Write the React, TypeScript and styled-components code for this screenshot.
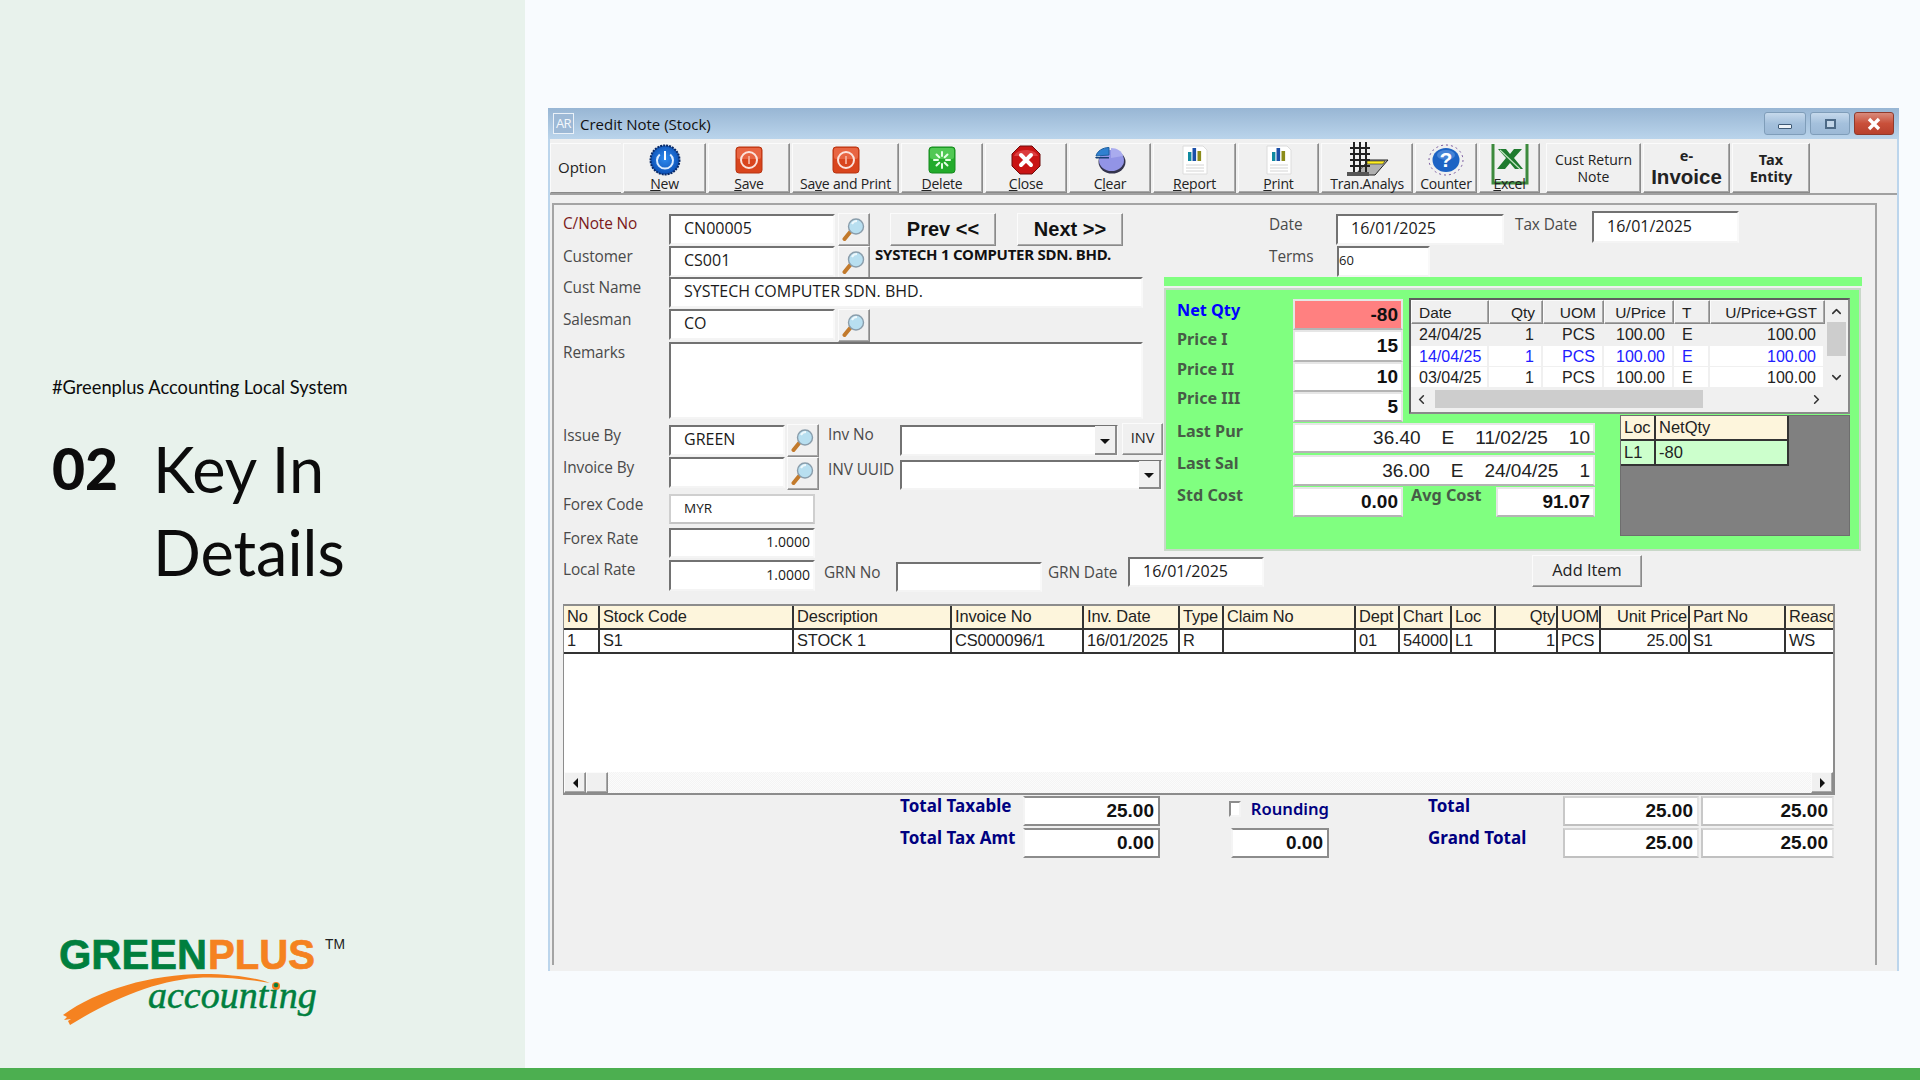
import React from "react";
import styled, { createGlobalStyle, css } from "styled-components";
import { ChevronUp, ChevronDown, ChevronLeft, ChevronRight } from "lucide-react";

const GlobalStyle = createGlobalStyle`
  html, body {
    margin: 0;
    padding: 0;
    background: #f8fbfe;
  }
  * {
    box-sizing: border-box;
  }
`;

const UI_FONT = `"Open Sans", "Noto Sans", sans-serif`;
const GRID_FONT = `"Liberation Sans", Arial, sans-serif`;
const BOLD_FONT = `"Noto Sans", sans-serif`;

const raised = css`
  border: 1px solid;
  border-color: #fbfbfb #8a8a8a #8a8a8a #fbfbfb;
  box-shadow: inset -1px -1px 0 #a8a8a8;
  background: #f0f0f0;
`;

const Page = styled.div`
  width: 1920px;
  height: 1080px;
  display: flex;
  flex-direction: column;
  overflow: hidden;
`;

const Content = styled.div`
  flex: 1;
  display: flex;
  min-height: 0;
`;

const BottomBar = styled.div`
  height: 12px;
  background: #4caf50;
`;

const Sidebar = styled.aside`
  width: 525px;
  background: #e8f2ec;
  padding: 376px 0 0 52px;
  display: flex;
  flex-direction: column;
  font-family: Lato, "Open Sans", sans-serif;
  color: #0c0c0c;
`;

const Tagline = styled.div`
  font-size: 18.3px;
  line-height: 22px;
`;

const Heading = styled.div`
  display: flex;
  align-items: flex-start;
  margin-top: 29px;
`;

const StepNumber = styled.div`
  width: 101px;
  font-size: 57px;
  line-height: 83px;
  font-weight: 900;
`;

const StepTitle = styled.div`
  font-size: 63px;
  line-height: 83px;
`;

const LogoWrap = styled.div`
  margin-top: auto;
  margin-bottom: 28px;
  height: 110px;
`;

const Main = styled.main`
  flex: 1;
  padding: 108px 0 0 23px;
  background: #f8fbfe;
`;

const Window = styled.section`
  width: 1351px;
  height: 863px;
  background: #f0f0f0;
  border-left: 2px solid #bcd5ec;
  border-right: 2px solid #bcd5ec;
  display: flex;
  flex-direction: column;
  font-family: ${UI_FONT};
  color: #444;
`;

const TitleBar = styled.header`
  height: 31px;
  margin: 0 -2px;
  padding: 0 5px 0 5px;
  display: flex;
  align-items: center;
  background: linear-gradient(#98b6d4, #bad4eb);
`;

const AppIcon = styled.div`
  width: 21px;
  height: 21px;
  border: 1px solid #eaf1f8;
  color: #f4f8fc;
  font-size: 13px;
  line-height: 19px;
  text-align: center;
  letter-spacing: -0.5px;
  background: #9db9d6;
`;

const TitleText = styled.div`
  margin-left: 6px;
  font-size: 15px;
  color: #111;
`;

const WinControls = styled.div`
  margin-left: auto;
  display: flex;
  gap: 4px;
`;

const WinButton = styled.div<{ $close?: boolean; $w: number }>`
  width: ${(p) => p.$w}px;
  height: 23px;
  border-radius: 3px;
  border: 1px solid ${(p) => (p.$close ? "#8f3a2c" : "#7f9db9")};
  background: ${(p) =>
    p.$close
      ? "linear-gradient(#d98b7c, #c9503a 50%, #b8412e)"
      : "linear-gradient(#c6d9ec, #a4c0dc 50%, #9cb9d6)"};
  display: flex;
  align-items: center;
  justify-content: center;
`;

const MinGlyph = styled.div`
  width: 14px;
  height: 5px;
  margin-top: 5px;
  background: #eef3f8;
  border: 1px solid #3f5a76;
  border-radius: 1px;
`;

const MaxGlyph = styled.div`
  width: 11px;
  height: 10px;
  background: #c2d5e8;
  border: 2px solid #4c6986;
`;

const Toolbar = styled.nav`
  height: 52px;
  margin-top: 4px;
  display: flex;
  gap: 2px;
  border-bottom: 2px solid #a0a0a0;
  color: #222;
`;

const OptionLabel = styled.div`
  width: 71px;
  padding-left: 7px;
  font-size: 15px;
  line-height: 46px;
  ${raised}
  border-right: none;
  box-shadow: none;
`;

const ToolButton = styled.button<{ $w: number; $gap?: number }>`
  ${raised}
  width: ${(p) => p.$w}px;
  margin-left: ${(p) => p.$gap || 0}px;
  padding: 0;
  font-family: ${UI_FONT};
  color: #222;
  display: flex;
  flex-direction: column;
  align-items: center;
`;

const ToolIcon = styled.span`
  height: 32px;
  display: flex;
  align-items: center;
  justify-content: center;
  position: relative;
  z-index: 0;
`;

const ToolLabel = styled.span`
  font-size: 14px;
  line-height: 15px;
  letter-spacing: -0.2px;
  white-space: nowrap;
  position: relative;
  z-index: 1;
`;

const TextTool = styled(ToolButton)<{ $bold?: boolean }>`
  justify-content: center;
  font-size: ${(p) => (p.$bold ? "14.5px" : "14px")};
  line-height: 17px;
  font-weight: ${(p) => (p.$bold ? 700 : 400)};
  color: #222;
  font-family: ${(p) => (p.$bold ? BOLD_FONT : UI_FONT)};
`;

const BigLine = styled.span`
  font-family: ${GRID_FONT};
  font-size: 20.5px;
  line-height: 25px;
`;

const Panel = styled.div`
  height: 762px;
  margin: 8px 20px 0 2px;
  border: 2px solid #a4a4a4;
  border-bottom: none;
  padding: 6px 0 0 9px;
  display: flex;
  flex-direction: column;
`;

const TopArea = styled.div`
  height: 347px;
  display: flex;
  align-items: flex-start;
`;

const LeftForm = styled.div`
  width: 601px;
  padding-top: 2px;
  display: flex;
  flex-direction: column;
`;

const RightForm = styled.div`
  width: 698px;
  display: flex;
  flex-direction: column;
`;

const FormRow = styled.div<{ $h: number }>`
  height: ${(p) => p.$h}px;
  display: flex;
  align-items: flex-start;
`;

const Label = styled.div<{ $w?: number; $ml?: number; $mt?: number; $color?: string }>`
  width: ${(p) => p.$w ?? 106}px;
  margin-left: ${(p) => p.$ml || 0}px;
  margin-top: ${(p) => p.$mt || 0}px;
  flex-shrink: 0;
  font-size: 15.4px;
  letter-spacing: -0.1px;
  line-height: 22px;
  white-space: nowrap;
  color: ${(p) => p.$color || "#4a4a4a"};
`;

const Field = styled.div<{
  $w: number;
  $h?: number;
  $mt?: number;
  $ml?: number;
  $right?: boolean;
  $flat?: boolean;
  $pad?: number;
  $size?: number;
}>`
  width: ${(p) => p.$w}px;
  height: ${(p) => p.$h ?? 31}px;
  margin-top: ${(p) => p.$mt || 0}px;
  margin-left: ${(p) => p.$ml || 0}px;
  flex-shrink: 0;
  background: #fff;
  color: #1a1a1a;
  font-size: ${(p) => p.$size ?? 16}px;
  display: flex;
  align-items: center;
  white-space: pre;
  padding: 0 ${(p) => (p.$right ? 3 : 0)}px 3px ${(p) => p.$pad ?? 13}px;
  justify-content: ${(p) => (p.$right ? "flex-end" : "flex-start")};
  border: 2px solid;
  border-color: ${(p) =>
    p.$flat ? "#cfcfcf #cfcfcf #c4c4c4 #cfcfcf" : "#727272 #f9f9f9 #f4f4f4 #727272"};
`;

const ComboArrow = styled.div`
  width: 22px;
  height: calc(100% + 5px);
  margin-left: auto;
  margin-right: -1px;
  margin-bottom: -3px;
  background: #f0f0f0;
  border-right: 2px solid #8a8a8a;
  border-bottom: 2px solid #8a8a8a;
  display: flex;
  align-items: center;
  justify-content: center;
  &::after {
    content: "";
    margin-top: 3px;
    border-left: 5px solid transparent;
    border-right: 5px solid transparent;
    border-top: 5px solid #111;
  }
`;

const SearchButton = styled.div<{ $ml?: number; $mt?: number }>`
  ${raised}
  width: 32px;
  height: 33px;
  margin-left: ${(p) => p.$ml ?? 3}px;
  margin-top: ${(p) => p.$mt || 0}px;
  display: flex;
  align-items: center;
  justify-content: center;
  flex-shrink: 0;
`;

const NavButton = styled.button<{ $ml: number }>`
  ${raised}
  width: 106px;
  height: 33px;
  margin-left: ${(p) => p.$ml}px;
  padding: 0;
  font-family: ${GRID_FONT};
  font-weight: 700;
  font-size: 20px;
  color: #111;
`;

const SmallButton = styled.button<{
  $w: number;
  $h: number;
  $ml: number;
  $mt: number;
  $size: number;
}>`
  ${raised}
  width: ${(p) => p.$w}px;
  height: ${(p) => p.$h}px;
  margin-left: ${(p) => p.$ml}px;
  margin-top: ${(p) => p.$mt}px;
  padding: 0 0 3px;
  font-family: ${UI_FONT};
  font-size: ${(p) => p.$size}px;
  color: #222;
  flex-shrink: 0;
`;

const CompanyName = styled.div`
  margin-left: 5px;
  font-family: ${BOLD_FONT};
  font-weight: 700;
  font-size: 15px;
  line-height: 17px;
  letter-spacing: -0.25px;
  color: #111;
  white-space: nowrap;
`;

const GreenBand = styled.div`
  height: 9px;
  background: #80ff80;
  margin-bottom: 2px;
`;

const GreenPanel = styled.div`
  height: 263px;
  margin-right: 1px;
  background: #80ff80;
  border: 2px solid #c8d8c8;
  padding: 8px 0 0 11px;
  display: flex;
  flex-direction: column;
`;

const GreenTop = styled.div`
  height: 125px;
  display: flex;
  align-items: flex-start;
`;

const PriceLabels = styled.div`
  width: 116px;
  padding-top: 1px;
  display: flex;
  flex-direction: column;
`;

const PriceLabel = styled.div<{ $blue?: boolean }>`
  height: 29.3px;
  line-height: 22px;
  font-family: ${BOLD_FONT};
  font-size: 16.2px;
  font-weight: 700;
  color: ${(p) => (p.$blue ? "#0000ff" : "#475c47")};
`;

const PriceFields = styled.div`
  width: 110px;
  padding-top: 1px;
  display: flex;
  flex-direction: column;
`;

const ValueField = styled.div<{
  $h: number;
  $w?: number;
  $red?: boolean;
  $ml?: number;
}>`
  width: ${(p) => (p.$w ? `${p.$w}px` : "100%")};
  height: ${(p) => p.$h}px;
  margin-left: ${(p) => p.$ml || 0}px;
  flex-shrink: 0;
  background: ${(p) => (p.$red ? "#ff8080" : "#fff")};
  border: 2px solid #e6e6e6;
  border-bottom-color: #b4b4b4;
  padding-right: 3px;
  font-family: ${GRID_FONT};
  font-weight: 700;
  font-size: 19px;
  color: #111;
  display: flex;
  align-items: center;
  justify-content: flex-end;
`;

const HistoryBox = styled.div`
  width: 441px;
  height: 116px;
  margin-left: 6px;
  border: 2px solid #5e5e5e;
  border-right-color: #8a8a8a;
  border-bottom-color: #8a8a8a;
  background: #f0f0f0;
  display: flex;
  flex-wrap: wrap;
  align-content: flex-start;
  font-family: ${GRID_FONT};
  font-size: 16px;
`;

const HistoryGrid = styled.div`
  width: 414px;
  display: grid;
  grid-template-columns: 78px 54px 61px 70px 36px 115px;
  grid-template-rows: 24px 22px 21px 21px;
  color: #222;
`;

const HistoryHead = styled.div<{ $right?: boolean }>`
  ${raised}
  padding: 0 ${(p) => (p.$right ? 7 : 0)}px 0 ${(p) => (p.$right ? 0 : 7)}px;
  line-height: 23px;
  font-size: 15.5px;
  text-align: ${(p) => (p.$right ? "right" : "left")};
  white-space: nowrap;
  overflow: hidden;
`;

const HistoryCell = styled.div<{ $right?: boolean; $tone: "selected" | "blue" | "plain" }>`
  padding: 0 ${(p) => (p.$right ? 7 : 0)}px 0 ${(p) => (p.$right ? 0 : 8)}px;
  text-align: ${(p) => (p.$right ? "right" : "left")};
  line-height: 21px;
  background: ${(p) => (p.$tone === "selected" ? "#f0f0f0" : "#fff")};
  color: ${(p) => (p.$tone === "blue" ? "#2020ff" : "#222")};
  border-right: 2px solid #f0f0f0;
  border-bottom: 1px solid #f0f0f0;
`;

const VScroll = styled.div`
  width: 23px;
  height: 88px;
  display: flex;
  flex-direction: column;
  align-items: center;
  color: #333;
`;

const VArrow = styled.div<{ $end?: boolean }>`
  height: 22px;
  margin-top: ${(p) => (p.$end ? "auto" : 0)};
  display: flex;
  align-items: center;
`;

const VThumb = styled.div`
  width: 19px;
  height: 34px;
  background: #cdcdcd;
`;

const HScroll = styled.div`
  width: 100%;
  height: 22px;
  display: flex;
  align-items: center;
  color: #333;
  background: #f0f0f0;
`;

const HThumb = styled.div`
  width: 268px;
  height: 18px;
  margin: 0 auto 0 3px;
  background: #cdcdcd;
`;

const ArrowBox = styled.div`
  width: 21px;
  display: flex;
  justify-content: center;
`;

const GreenBottom = styled.div`
  display: flex;
  align-items: flex-start;
`;

const CostColumn = styled.div`
  width: 418px;
  display: flex;
  flex-direction: column;
`;

const CostRow = styled.div<{ $h: number }>`
  height: ${(p) => p.$h}px;
  display: flex;
`;

const CostLabel = styled.div<{ $ml?: number; $w: number }>`
  width: ${(p) => p.$w}px;
  margin-left: ${(p) => p.$ml || 0}px;
  flex-shrink: 0;
  font-family: ${BOLD_FONT};
  font-size: 16.2px;
  font-weight: 700;
  line-height: 16px;
  color: #475c47;
  white-space: nowrap;
`;

const CostValue = styled.div<{ $h: number }>`
  flex: 1;
  height: ${(p) => p.$h}px;
  background: #fff;
  border: 2px solid #e6e6e6;
  border-bottom-color: #b4b4b4;
  padding-right: 3px;
  display: flex;
  align-items: center;
  justify-content: flex-end;
  gap: 21px;
  font-family: ${GRID_FONT};
  font-size: 19px;
  color: #222;
`;

const StockBox = styled.div`
  width: 230px;
  height: 121px;
  margin: -8px 0 0 25px;
  background: #808080;
  border: 1px solid #6e6e6e;
`;

const StockTable = styled.div`
  width: 168px;
  display: grid;
  grid-template-columns: 35px 133px;
  grid-template-rows: 25px 25px;
  font-family: ${GRID_FONT};
  font-size: 16.5px;
  color: #222;
  line-height: 23px;
`;

const StockHead = styled.div`
  background: #fdf5dc;
  padding-left: 3px;
  border-right: 2px solid #333;
  border-bottom: 2px solid #333;
`;

const StockCell = styled.div`
  background: #ccffcc;
  padding-left: 3px;
  border-right: 2px solid #333;
  border-bottom: 2px solid #333;
`;

const DataGrid = styled.div`
  width: 1272px;
  height: 191px;
  margin-top: 13px;
  border-top: 2px solid #8c8c8c;
  border-left: 1px solid #8c8c8c;
  border-right: 2px solid #8c8c8c;
  background: #fff;
  display: flex;
  flex-direction: column;
  font-family: ${GRID_FONT};
  font-size: 16.4px;
  letter-spacing: -0.1px;
  color: #222;
`;

const GRID_COLUMNS = [36, 194, 158, 132, 96, 44, 132, 44, 52, 44, 62, 43, 89, 96, 47];

const GridRow = styled.div`
  display: grid;
  grid-template-columns: ${GRID_COLUMNS.map((w) => `${w}px`).join(" ")};
  height: 24px;
`;

const GridCell = styled.div<{ $head?: boolean; $right?: boolean }>`
  background: ${(p) => (p.$head ? "#fdf5dc" : "#fff")};
  border-right: 2px solid #333;
  border-bottom: 2px solid #333;
  padding: 0 ${(p) => (p.$right ? 1 : 0)}px 0 ${(p) => (p.$right ? 0 : 3)}px;
  line-height: 20px;
  text-align: ${(p) => (p.$right ? "right" : "left")};
  overflow: hidden;
  white-space: nowrap;
  &:last-child {
    border-right: none;
  }
`;

const GridFill = styled.div`
  flex: 1;
`;

const GridScroll = styled.div`
  height: 23px;
  display: flex;
  justify-content: space-between;
  background: repeating-conic-gradient(#f4f4f4 0 25%, #fbfbfb 0 50%) 0 0 / 2px 2px;
  border-bottom: 2px solid #8c8c8c;
`;

const ScrollLeft = styled.div`
  display: flex;
`;

const ScrollButton = styled.div<{ $dir?: "left" | "right" }>`
  ${raised}
  width: 22px;
  height: 21px;
  display: flex;
  align-items: center;
  justify-content: center;
  &::after {
    content: "";
    border-top: 5px solid transparent;
    border-bottom: 5px solid transparent;
    ${(p) =>
      p.$dir === "left"
        ? "border-right: 5px solid #111;"
        : p.$dir === "right"
          ? "border-left: 5px solid #111;"
          : ""}
  }
`;

const Totals = styled.div`
  display: grid;
  grid-template-columns: 337px 123px 137px 69px 100px 99px 135px 136px 2px 133px;
  grid-template-rows: 30px 30px;
  row-gap: 2px;
  margin-top: 1px;
  align-items: start;
`;

const TotalLabel = styled.div<{ $col: number }>`
  grid-column: ${(p) => p.$col};
  font-family: ${BOLD_FONT};
  font-weight: 700;
  font-size: 17px;
  line-height: 19px;
  letter-spacing: 0.05px;
  color: #000080;
  white-space: nowrap;
`;

const TotalValue = styled.div<{ $col: number; $flat?: boolean; $ml?: number }>`
  grid-column: ${(p) => p.$col};
  height: 30px;
  margin-left: ${(p) => p.$ml || 0}px;
  background: #fff;
  border: 2px solid;
  border-color: ${(p) =>
    p.$flat ? "#d4d4d4 #e4e4e4 #c0c0c0 #c8c8c8" : "#8c8c8c #8c8c8c #8c8c8c #f4f4f4"};
  padding-right: 4px;
  font-family: ${GRID_FONT};
  font-weight: 700;
  font-size: 19px;
  color: #111;
  display: flex;
  align-items: center;
  justify-content: flex-end;
`;

const RoundingRow = styled.div`
  grid-column: 5;
  display: flex;
  align-items: center;
  padding-top: 1px;
  white-space: nowrap;
`;

const CheckBox = styled.div`
  width: 16px;
  height: 16px;
  background: #fff;
  border: 2px solid;
  border-color: #8c8c8c #f4f4f4 #f4f4f4 #8c8c8c;
`;

const RoundingLabel = styled.div`
  margin-left: 10px;
  font-family: ${BOLD_FONT};
  font-weight: 600;
  font-size: 16.6px;
  color: #000080;
`;

const Key = styled.span`
  text-decoration: underline;
`;

const Spacer = styled.div<{ $col: number }>`
  grid-column: ${(p) => p.$col};
`;

const OverflowSvg = styled.svg<{ $mt?: number }>`
  overflow: visible;
  margin-top: ${(p) => p.$mt || 0}px;
`;

function PowerIcon() {
  return (
    <svg width="32" height="32" viewBox="0 0 32 32">
      <defs>
        <radialGradient id="pw" cx="50%" cy="45%" r="55%">
          <stop offset="0%" stopColor="#2f8cf0" />
          <stop offset="100%" stopColor="#0b4fb5" />
        </radialGradient>
      </defs>
      <circle cx="16" cy="16" r="14.5" fill="url(#pw)" stroke="#0a2a66" strokeWidth="2" strokeDasharray="2 1" />
      <path d="M10.8 10.5a8 8 0 1 0 10.4 0" fill="none" stroke="#dcecff" strokeWidth="2" />
      <path d="M16 7v9" stroke="#fff" strokeWidth="2" />
    </svg>
  );
}

function SaveIcon() {
  return (
    <svg width="28" height="28" viewBox="0 0 28 28">
      <rect x="1" y="1" width="26" height="26" rx="3" fill="#d9451d" stroke="#b73512" />
      <rect x="2" y="2" width="24" height="11" rx="2" fill="#ee7352" opacity="0.7" />
      <circle cx="14" cy="14" r="8" fill="none" stroke="#fbe3dc" strokeWidth="2" />
      <path d="M14 10v8" stroke="#f3a48e" strokeWidth="2" />
    </svg>
  );
}

function DeleteIcon() {
  return (
    <svg width="28" height="28" viewBox="0 0 28 28">
      <rect x="1" y="1" width="26" height="26" rx="3" fill="#23ab2b" stroke="#178a1e" />
      <rect x="2" y="2" width="24" height="11" rx="2" fill="#6fdc6f" opacity="0.6" />
      <g stroke="#e6ffe6" strokeWidth="2" strokeLinecap="round">
        <path d="M14 6v4M14 18v4M6 14h4M18 14h4M8.5 8.5l2.8 2.8M16.7 16.7l2.8 2.8M19.5 8.5l-2.8 2.8M11.3 16.7l-2.8 2.8" />
      </g>
    </svg>
  );
}

function CloseIcon() {
  return (
    <svg width="30" height="30" viewBox="0 0 30 30">
      <path d="M9 1h12l8 8v12l-8 8H9l-8-8V9z" fill="#c91414" stroke="#6e0a0a" strokeLinejoin="round" />
      <path d="M3 11C6 3 24 3 27 11" fill="#e8585a" opacity="0.6" />
      <path d="M10 10l10 10M20 10L10 20" stroke="#fff" strokeWidth="4" strokeLinecap="round" />
    </svg>
  );
}

function ClearIcon() {
  return (
    <svg width="32" height="28" viewBox="0 0 32 28">
      <ellipse cx="18" cy="16" rx="13.5" ry="11.5" fill="#33334d" />
      <ellipse cx="17.5" cy="14.5" rx="12.5" ry="10.5" fill="#9294e6" />
      <path d="M2 10C3 5 9 1.5 15 1.5V9z" fill="#2f80d0" stroke="#1d5f9f" />
      <path d="M1 11h14v1.5H2z" fill="#163f73" />
      <path d="M17 2c6 0 11 3 12 8l-12 2z" fill="#a9abee" />
    </svg>
  );
}

function ReportIcon() {
  return (
    <svg width="26" height="30" viewBox="0 0 26 30">
      <path d="M1 1h20l4 4v24H1z" fill="#fff" stroke="#dcdcdc" />
      <rect x="6" y="7" width="3.4" height="9" fill="#0f8aa0" />
      <rect x="10.5" y="3" width="3.6" height="13" fill="#1a4fa8" />
      <rect x="15.5" y="6" width="3.6" height="10" fill="#8c8c1a" />
      <path d="M4 20h18M4 23h18M4 26h18" stroke="#d4d4d4" />
    </svg>
  );
}

function TranIcon() {
  return (
    <OverflowSvg width="44" height="36" viewBox="0 0 44 36">
      <path d="M24 18h19L30 33H10z" fill="#b0b0b0" stroke="#222" />
      <path d="M22 19h18l-2 3H22z" fill="#ffee22" stroke="#222" strokeWidth="0.6" />
      <path d="M9 0v30M21 0v30M5 6h20M5 12h20M5 18h20M5 24h20" stroke="#222" strokeWidth="2" fill="none" />
      <path d="M15 0v30" stroke="#222" strokeWidth="2" />
      <path d="M2 30h22v4H2z" fill="#555" />
    </OverflowSvg>
  );
}

function CounterIcon() {
  return (
    <svg width="36" height="32" viewBox="0 0 36 32">
      <ellipse cx="18" cy="16" rx="17" ry="15" fill="none" stroke="#7a5aa0" strokeDasharray="2 3" />
      <ellipse cx="18" cy="16" rx="13.5" ry="12" fill="#1d63c4" />
      <ellipse cx="18" cy="11" rx="9" ry="5" fill="#6ea3e8" opacity="0.5" />
      <text x="18" y="23" textAnchor="middle" fontFamily="Liberation Sans" fontWeight="700" fontSize="21" fill="#fff">
        ?
      </text>
    </svg>
  );
}

function ExcelIcon() {
  return (
    <OverflowSvg width="38" height="42" viewBox="0 0 38 42" $mt={9}>
      <path d="M2 0v39h34V0" fill="none" stroke="#3d8a3d" strokeWidth="3" />
      <path d="M7 5h8l4 5 4-5h8l-8 9 9 11H24l-5-6-5 6H6l9-11z" fill="#1f7a2e" />
      <path d="M9 6l20 19" stroke="#bfe3bf" strokeWidth="1.2" />
    </OverflowSvg>
  );
}

function SearchIcon() {
  return (
    <svg width="24" height="26" viewBox="0 0 24 26">
      <path d="M9 14L2.5 22" stroke="#c27a2c" strokeWidth="4" strokeLinecap="round" />
      <circle cx="14" cy="9.5" r="7.5" fill="#b8dff0" stroke="#8a9dab" strokeWidth="1.4" />
      <path d="M10 7c1-2 3-3 5-3" stroke="#eef8fc" strokeWidth="2" fill="none" />
    </svg>
  );
}

function Logo() {
  return (
    <svg width="300" height="110" viewBox="0 0 300 110">
      <text x="7" y="39" fontFamily="Liberation Sans" fontWeight="700" fontSize="43" fill="#007f3e" stroke="#007f3e" strokeWidth="0.7" textLength="148" lengthAdjust="spacingAndGlyphs">
        GREEN
      </text>
      <text x="156" y="39" fontFamily="Liberation Sans" fontWeight="700" fontSize="43" fill="#f58220" stroke="#f58220" strokeWidth="0.7" textLength="107" lengthAdjust="spacingAndGlyphs">
        PLUS
      </text>
      <text x="273" y="19" fontFamily="Liberation Sans" fontSize="15" fill="#222" textLength="20" lengthAdjust="spacingAndGlyphs">
        TM
      </text>
      <path
        d="M11 85C45 60 100 44 151 44C180 44 205 48 218 53C195 49 172 47 151 47.5C110 49 65 66 18 95L16 91L19 89L12 90L15 87Z"
        fill="#f58220"
      />
      <circle cx="224" cy="56" r="4" fill="#f58220" />
      <text x="96" y="78" fontFamily="Liberation Serif" fontStyle="italic" fontSize="38" fill="#007f3e" stroke="#007f3e" strokeWidth="0.5">
        accounting
      </text>
    </svg>
  );
}

const TOOLS = [
  { w: 83, icon: <PowerIcon />, label: <><Key>N</Key>ew</> },
  { w: 82, icon: <SaveIcon />, label: <><Key>S</Key>ave</> },
  { w: 107, icon: <SaveIcon />, label: <>Sa<Key>v</Key>e and Print</> },
  { w: 82, icon: <DeleteIcon />, label: <><Key>D</Key>elete</> },
  { w: 82, icon: <CloseIcon />, label: <><Key>C</Key>lose</> },
  { w: 82, icon: <ClearIcon />, label: <>C<Key>l</Key>ear</> },
  { w: 83, icon: <ReportIcon />, label: <><Key>R</Key>eport</> },
  { w: 81, icon: <ReportIcon />, label: <><Key>P</Key>rint</> },
  { w: 92, icon: <TranIcon />, label: <>Tran.Analys</> },
  { w: 62, icon: <CounterIcon />, label: <>Counter</> },
  { w: 61, icon: <ExcelIcon />, label: <><Key>E</Key>xcel</> },
];

const HISTORY = [
  { date: "24/04/25", tone: "selected" as const },
  { date: "14/04/25", tone: "blue" as const },
  { date: "03/04/25", tone: "plain" as const },
];

const GRID_HEAD: [string, boolean][] = [
  ["No", false], ["Stock Code", false], ["Description", false], ["Invoice No", false],
  ["Inv. Date", false], ["Type", false], ["Claim No", false], ["Dept", false],
  ["Chart", false], ["Loc", false], ["Qty", true], ["UOM", false],
  ["Unit Price", true], ["Part No", false], ["Reason", false],
];

const GRID_DATA: [string, boolean][] = [
  ["1", false], ["S1", false], ["STOCK 1", false], ["CS000096/1", false],
  ["16/01/2025", false], ["R", false], ["", false], ["01", false],
  ["54000", false], ["L1", false], ["1", true], ["PCS", false],
  ["25.00", true], ["S1", false], ["WS", false],
];

export default function App() {
  return (
    <Page>
      <GlobalStyle />
      <Content>
        <Sidebar>
          <Tagline>#Greenplus Accounting Local System</Tagline>
          <Heading>
            <StepNumber>02</StepNumber>
            <StepTitle>
              Key In
              <br />
              Details
            </StepTitle>
          </Heading>
          <LogoWrap>
            <Logo />
          </LogoWrap>
        </Sidebar>
        <Main>
          <Window>
            <TitleBar>
              <AppIcon>AR</AppIcon>
              <TitleText>Credit Note (Stock)</TitleText>
              <WinControls>
                <WinButton $w={42}><MinGlyph /></WinButton>
                <WinButton $w={40}><MaxGlyph /></WinButton>
                <WinButton $w={40} $close>
                  <svg width="16" height="14" viewBox="0 0 16 14">
                    <path d="M3 2l10 10M13 2L3 12" stroke="#fff" strokeWidth="3.4" />
                  </svg>
                </WinButton>
              </WinControls>
            </TitleBar>

            <Toolbar>
              <OptionLabel>Option</OptionLabel>
              {TOOLS.map((t, i) => (
                <ToolButton key={i} $w={t.w}>
                  <ToolIcon>{t.icon}</ToolIcon>
                  <ToolLabel>{t.label}</ToolLabel>
                </ToolButton>
              ))}
              <TextTool $w={95} $gap={4}>Cust Return<br />Note</TextTool>
              <TextTool $w={87} $bold>
                e-
                <BigLine>Invoice</BigLine>
              </TextTool>
              <TextTool $w={78} $bold>Tax<br />Entity</TextTool>
            </Toolbar>

            <Panel>
              <TopArea>
                <LeftForm>
                  <FormRow $h={33}>
                    <Label $color="#7a1a1a">C/Note No</Label>
                    <Field $w={166} $mt={1}>CN00005</Field>
                    <SearchButton><SearchIcon /></SearchButton>
                    <NavButton $ml={20}>Prev &lt;&lt;</NavButton>
                    <NavButton $ml={21}>Next &gt;&gt;</NavButton>
                  </FormRow>
                  <FormRow $h={31}>
                    <Label>Customer</Label>
                    <Field $w={166}>CS001</Field>
                    <SearchButton><SearchIcon /></SearchButton>
                    <CompanyName>SYSTECH 1 COMPUTER SDN. BHD.</CompanyName>
                  </FormRow>
                  <FormRow $h={32}>
                    <Label>Cust Name</Label>
                    <Field $w={474}>SYSTECH COMPUTER SDN. BHD.</Field>
                  </FormRow>
                  <FormRow $h={33}>
                    <Label>Salesman</Label>
                    <Field $w={166}>CO</Field>
                    <SearchButton><SearchIcon /></SearchButton>
                  </FormRow>
                  <FormRow $h={82}>
                    <Label>Remarks</Label>
                    <Field $w={474} $h={77} />
                  </FormRow>
                  <FormRow $h={33}>
                    <Label $mt={1}>Issue By</Label>
                    <Field $w={116} $mt={1}>GREEN</Field>
                    <SearchButton $ml={2}><SearchIcon /></SearchButton>
                    <Label $ml={9} $w={72}>Inv No</Label>
                    <Field $w={218} $mt={1} $pad={0}><ComboArrow /></Field>
                    <SmallButton $w={41} $h={32} $ml={4} $mt={-1} $size={14.5}>INV</SmallButton>
                  </FormRow>
                  <FormRow $h={37}>
                    <Label>Invoice By</Label>
                    <Field $w={116} />
                    <SearchButton $ml={2}><SearchIcon /></SearchButton>
                    <Label $ml={9} $w={72} $mt={2}>INV UUID</Label>
                    <Field $w={262} $h={30} $mt={3} $pad={0}><ComboArrow /></Field>
                  </FormRow>
                  <FormRow $h={34}>
                    <Label>Forex Code</Label>
                    <Field $w={146} $h={30} $flat $size={13.5}>MYR</Field>
                  </FormRow>
                  <FormRow $h={30}>
                    <Label>Forex Rate</Label>
                    <Field $w={146} $h={30} $right $size={14}>1.0000</Field>
                  </FormRow>
                </LeftForm>

                <RightForm>
                  <FormRow $h={35}>
                    <Label $ml={105} $w={67} $mt={3}>Date</Label>
                    <Field $w={168} $mt={3}>16/01/2025</Field>
                    <Label $ml={11} $w={77} $mt={3}>Tax Date</Label>
                    <Field $w={147} $h={32}>16/01/2025</Field>
                  </FormRow>
                  <FormRow $h={31}>
                    <Label $ml={105} $w={68}>Terms</Label>
                    <Field $w={93} $pad={0} $size={13}>60</Field>
                  </FormRow>
                  <GreenBand />
                  <GreenPanel>
                    <GreenTop>
                      <PriceLabels>
                        <PriceLabel $blue>Net Qty</PriceLabel>
                        <PriceLabel>Price I</PriceLabel>
                        <PriceLabel>Price II</PriceLabel>
                        <PriceLabel>Price III</PriceLabel>
                      </PriceLabels>
                      <PriceFields>
                        <ValueField $h={31} $red>-80</ValueField>
                        <ValueField $h={32}>15</ValueField>
                        <ValueField $h={30}>10</ValueField>
                        <ValueField $h={30}>5</ValueField>
                      </PriceFields>
                      <HistoryBox>
                        <HistoryGrid>
                          <HistoryHead>Date</HistoryHead>
                          <HistoryHead $right>Qty</HistoryHead>
                          <HistoryHead $right>UOM</HistoryHead>
                          <HistoryHead $right>U/Price</HistoryHead>
                          <HistoryHead>T</HistoryHead>
                          <HistoryHead $right>U/Price+GST</HistoryHead>
                          {HISTORY.map((r) => (
                            <React.Fragment key={r.date}>
                              <HistoryCell $tone={r.tone}>{r.date}</HistoryCell>
                              <HistoryCell $tone={r.tone} $right>1</HistoryCell>
                              <HistoryCell $tone={r.tone} $right>PCS</HistoryCell>
                              <HistoryCell $tone={r.tone} $right>100.00</HistoryCell>
                              <HistoryCell $tone={r.tone}>E</HistoryCell>
                              <HistoryCell $tone={r.tone} $right>100.00</HistoryCell>
                            </React.Fragment>
                          ))}
                        </HistoryGrid>
                        <VScroll>
                          <VArrow><ChevronUp size={15} strokeWidth={2.5} /></VArrow>
                          <VThumb />
                          <VArrow $end><ChevronDown size={15} strokeWidth={2.5} /></VArrow>
                        </VScroll>
                        <HScroll>
                          <ArrowBox><ChevronLeft size={15} strokeWidth={2.5} /></ArrowBox>
                          <HThumb />
                          <ArrowBox><ChevronRight size={15} strokeWidth={2.5} /></ArrowBox>
                          <ArrowBox />
                        </HScroll>
                      </HistoryBox>
                    </GreenTop>
                    <GreenBottom>
                      <CostColumn>
                        <CostRow $h={32}>
                          <CostLabel $w={116}>Last Pur</CostLabel>
                          <CostValue $h={30}>
                            <span>36.40</span><span>E</span><span>11/02/25</span><span>10</span>
                          </CostValue>
                        </CostRow>
                        <CostRow $h={32}>
                          <CostLabel $w={116}>Last Sal</CostLabel>
                          <CostValue $h={31}>
                            <span>36.00</span><span>E</span><span>24/04/25</span><span>1</span>
                          </CostValue>
                        </CostRow>
                        <CostRow $h={30}>
                          <CostLabel $w={116}>Std Cost</CostLabel>
                          <ValueField $h={30} $w={110}>0.00</ValueField>
                          <CostLabel $w={85} $ml={8}>Avg Cost</CostLabel>
                          <ValueField $h={30} $w={99}>91.07</ValueField>
                        </CostRow>
                      </CostColumn>
                      <StockBox>
                        <StockTable>
                          <StockHead>Loc</StockHead>
                          <StockHead>NetQty</StockHead>
                          <StockCell>L1</StockCell>
                          <StockCell>-80</StockCell>
                        </StockTable>
                      </StockBox>
                    </GreenBottom>
                  </GreenPanel>
                </RightForm>
              </TopArea>

              <FormRow $h={33}>
                <Label $mt={1}>Local Rate</Label>
                <Field $w={146} $mt={2} $right $size={14}>1.0000</Field>
                <Label $ml={9} $w={72} $mt={4}>GRN No</Label>
                <Field $w={146} $h={30} $mt={4} />
                <Label $ml={6} $w={80} $mt={4}>GRN Date</Label>
                <Field $w={136} $h={30} $mt={-1}>16/01/2025</Field>
                <SmallButton $w={110} $h={32} $ml={268} $mt={-3} $size={16.4}>Add Item</SmallButton>
              </FormRow>

              <DataGrid>
                <GridRow>
                  {GRID_HEAD.map(([text, right]) => (
                    <GridCell key={text} $head $right={right}>{text}</GridCell>
                  ))}
                </GridRow>
                <GridRow>
                  {GRID_DATA.map(([text, right], i) => (
                    <GridCell key={i} $right={right}>{text}</GridCell>
                  ))}
                </GridRow>
                <GridFill />
                <GridScroll>
                  <ScrollLeft>
                    <ScrollButton $dir="left" />
                    <ScrollButton />
                  </ScrollLeft>
                  <ScrollButton $dir="right" />
                </GridScroll>
              </DataGrid>

              <Totals>
                <Spacer $col={1} />
                <TotalLabel $col={2}>Total Taxable</TotalLabel>
                <TotalValue $col={3}>25.00</TotalValue>
                <RoundingRow>
                  <CheckBox />
                  <RoundingLabel>Rounding</RoundingLabel>
                </RoundingRow>
                <TotalLabel $col={7}>Total</TotalLabel>
                <TotalValue $col={8} $flat>25.00</TotalValue>
                <TotalValue $col={10} $flat>25.00</TotalValue>
                <Spacer $col={1} />
                <TotalLabel $col={2}>Total Tax Amt</TotalLabel>
                <TotalValue $col={3}>0.00</TotalValue>
                <TotalValue $col={5} $ml={2}>0.00</TotalValue>
                <TotalLabel $col={7}>Grand Total</TotalLabel>
                <TotalValue $col={8} $flat>25.00</TotalValue>
                <TotalValue $col={10} $flat>25.00</TotalValue>
              </Totals>
            </Panel>
          </Window>
        </Main>
      </Content>
      <BottomBar />
    </Page>
  );
}
